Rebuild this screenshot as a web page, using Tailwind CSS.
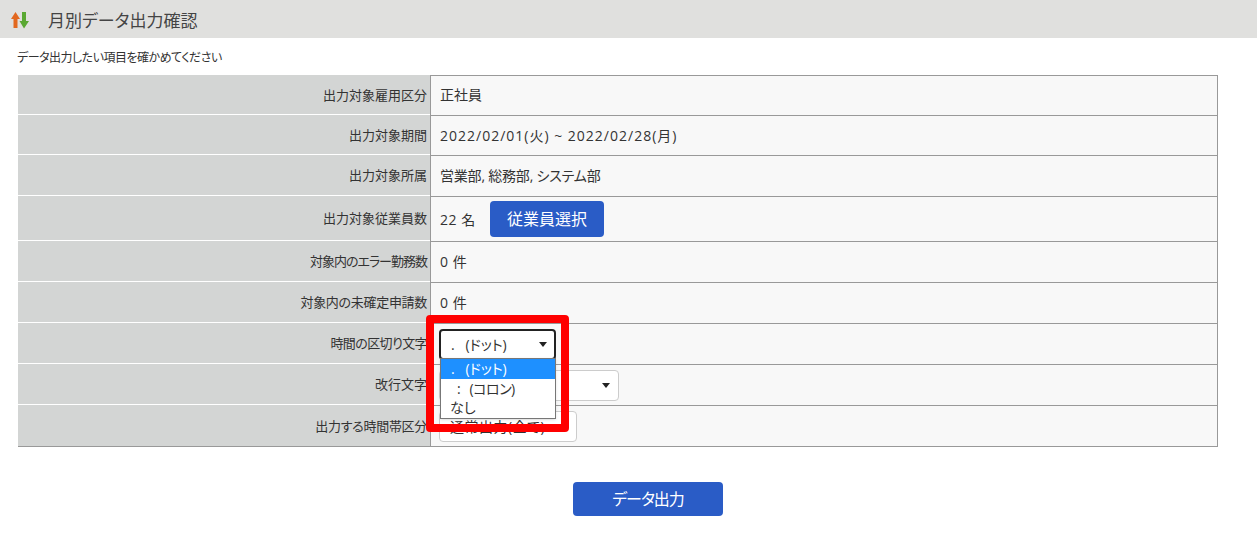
<!DOCTYPE html>
<html lang="ja">
<head>
  <meta charset="UTF-8" />
  <title>月別データ出力確認</title>
  <script src="https://cdn.jsdelivr.net/npm/@tailwindcss/browser@4"></script>
</head>
<body class="bg-white text-[#333] font-['Open_Sans','Noto_Sans_CJK_JP',sans-serif] [font-feature-settings:'palt'] overflow-hidden">
  <!-- Title bar -->
  <header class="h-[38px] bg-[#e0e0de] flex items-center pl-[11px]">
    <svg width="18" height="17" viewBox="0 0 18 17" class="mt-[2px]">
      <path d="M4.5 0 L9 7 H6.5 V16 H2.5 V7 H0 Z" fill="#e2681f" />
      <path d="M11 0 H15 V9 H18 L13 16.5 L8.5 9 H11 Z" fill="#5aa832" />
    </svg>
    <h1 class="ml-[19px] mt-[3px] text-[17px] text-[#444]">月別データ出力確認</h1>
  </header>

  <p class="ml-[17px] mt-[11px] h-[26px] text-[12px] leading-[18px] tracking-[-0.5px]">データ出力したい項目を確かめてください</p>

  <!-- Confirm table -->
  <div class="relative ml-[18px] w-[1200px] text-[14px] border-b border-[#999]">
    <div class="flex h-[40px]">
      <div class="w-[412px] bg-[#d3d5d4] border-b border-white flex items-center justify-end pt-[2px] pr-[3px] text-[13px]">出力対象雇用区分</div>
      <div class="flex-1 bg-[#f8f8f8] border-l border-t border-r border-[#999] flex items-center pb-[2px] pl-[9px]">正社員</div>
    </div>
    <div class="flex h-[40px]">
      <div class="w-[412px] bg-[#d3d5d4] border-b border-white flex items-center justify-end pt-[2px] pr-[3px] text-[13px]">出力対象期間</div>
      <div class="flex-1 bg-[#f8f8f8] border-l border-t border-r border-[#999] flex items-center pl-[9px] tracking-[1px]">2022/02/01(火) ~ 2022/02/28(月)</div>
    </div>
    <div class="flex h-[41px]">
      <div class="w-[412px] bg-[#d3d5d4] border-b border-white flex items-center justify-end pt-[2px] pr-[3px] text-[13px]">出力対象所属</div>
      <div class="flex-1 bg-[#f8f8f8] border-l border-t border-r border-[#999] flex items-center pb-[2px] pl-[9px] tracking-[-0.2px]">営業部, 総務部, システム部</div>
    </div>
    <div class="flex h-[45px]">
      <div class="w-[412px] bg-[#d3d5d4] border-b border-white flex items-center justify-end pt-[2px] pr-[3px] text-[13px]">出力対象従業員数</div>
      <div class="flex-1 bg-[#f8f8f8] border-l border-t border-r border-[#999] flex items-center pl-[9px] tracking-[0.5px]">
        <span class="w-[36px]">22 名</span>
        <button class="ml-[14px] w-[114px] h-[36px] bg-[#2a5cc6] text-white text-[16px] tracking-normal rounded-[4px]">従業員選択</button>
      </div>
    </div>
    <div class="flex h-[41px]">
      <div class="w-[412px] bg-[#d3d5d4] border-b border-white flex items-center justify-end pt-[2px] pr-[3px] text-[13px] tracking-[-1px]">対象内のエラー勤務数</div>
      <div class="flex-1 bg-[#f8f8f8] border-l border-t border-r border-[#999] flex items-center pb-[2px] pl-[9px] tracking-[0.5px]">0 件</div>
    </div>
    <div class="flex h-[41px]">
      <div class="w-[412px] bg-[#d3d5d4] border-b border-white flex items-center justify-end pt-[2px] pr-[3px] text-[13px] tracking-[-0.3px]">対象内の未確定申請数</div>
      <div class="flex-1 bg-[#f8f8f8] border-l border-t border-r border-[#999] flex items-center pb-[2px] pl-[9px] tracking-[0.5px]">0 件</div>
    </div>
    <div class="flex h-[41px]">
      <div class="w-[412px] bg-[#d3d5d4] border-b border-white flex items-center justify-end pt-[2px] pr-[3px] text-[13px] tracking-[-0.6px]">時間の区切り文字</div>
      <div class="flex-1 bg-[#f8f8f8] border-l border-t border-r border-[#999] flex items-center pl-[8px]">
        <div class="w-[117px] h-[31px] bg-white border-2 border-[#222] rounded-[4px] flex items-center justify-between pl-[10px] pr-[7px]">
          <span class="whitespace-pre">.   (ドット)</span>
          <span class="w-0 h-0 border-x-[4px] border-x-transparent border-t-[5px] border-t-[#222]"></span>
        </div>
      </div>
    </div>
    <div class="flex h-[41px]">
      <div class="w-[412px] bg-[#d3d5d4] border-b border-white flex items-center justify-end pt-[2px] pr-[3px] text-[13px]">改行文字</div>
      <div class="flex-1 bg-[#f8f8f8] border-l border-t border-r border-[#999] flex items-center pl-[8px]">
        <div class="w-[180px] h-[31px] bg-white border border-[#ccc] rounded-[4px] flex items-center justify-between pl-[10px] pr-[8px]">
          <span>CRLF(Windows)</span>
          <span class="w-0 h-0 border-x-[4px] border-x-transparent border-t-[5px] border-t-[#222]"></span>
        </div>
      </div>
    </div>
    <div class="flex h-[41px]">
      <div class="w-[412px] bg-[#d3d5d4] flex items-center justify-end pt-[2px] pr-[3px] text-[13px] tracking-[-0.3px]">出力する時間帯区分</div>
      <div class="flex-1 bg-[#f8f8f8] border-l border-t border-r border-[#999] flex items-center pl-[8px]">
        <div class="w-[138px] h-[31px] bg-white border border-[#ccc] rounded-[4px] flex items-center pl-[10px] tracking-[0.5px]">通常出力(全て)</div>
      </div>
    </div>

    <!-- Open dropdown -->
    <ul class="absolute left-[422px] top-[283px] w-[116px] bg-white border border-[#777] shadow-sm text-[14px] leading-[19.5px]">
      <li class="bg-[#1e90ff] text-white pl-[10px] whitespace-pre">.   (ドット)</li>
      <li class="pl-[16px] whitespace-pre tracking-[-0.5px]">:   (コロン)</li>
      <li class="pl-[9px]">なし</li>
    </ul>
    <!-- Annotation -->
    <div class="absolute left-[408px] top-[240px] w-[143px] h-[117px] border-[8px] border-[#f00] rounded-[4px]"></div>
  </div>

  <div class="flex justify-center mt-[35px] pl-[39px]">
    <button class="w-[150px] h-[34px] bg-[#2a5cc6] text-white text-[16px] tracking-[-1px] rounded-[4px]">データ出力</button>
  </div>
</body>
</html>
